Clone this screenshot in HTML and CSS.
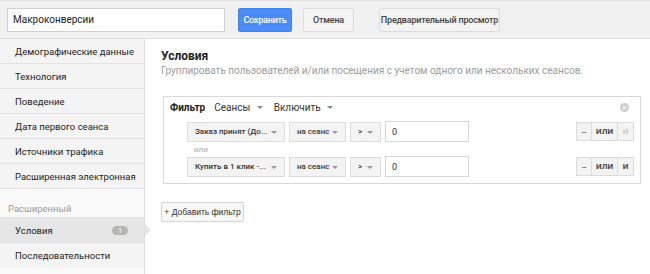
FILE: index.html
```html
<!DOCTYPE html>
<html lang="ru">
<head>
    <meta charset="UTF-8">
    <meta name="viewport" content="width=device-width, initial-scale=1.0">
    <title>Сегмент</title>
    <link rel="stylesheet" href="styles.css">
</head>
<body>
    <div class="topbar">
        <input class="name" type="text" value="Макроконверсии">
        <button class="btn primary">Сохранить</button>
        <button class="btn cancel">Отмена</button>
        <button class="btn preview">Предварительный просмотр</button>
    </div>
    <div class="content">
        <div class="sidebar">
            <div class="item">Демографические данные</div>
            <div class="item">Технология</div>
            <div class="item">Поведение</div>
            <div class="item">Дата первого сеанса</div>
            <div class="item">Источники трафика</div>
            <div class="item">Расширенная электронная</div>
            <div class="section">Расширенный</div>
            <div class="item selected">Условия <span class="badge">1</span></div>
            <div class="item last">Последовательности</div>
        </div>
        <div class="main">
            <div class="title">Условия</div>
            <div class="subtitle">Группировать пользователей и/или посещения с учетом одного или нескольких сеансов.</div>
            <div class="filter">
                <div class="filter-head">
                    <b>Фильтр</b>
                    <span class="menu">Сеансы <i class="caret"></i></span>
                    <span class="menu">Включить <i class="caret"></i></span>
                    <span class="close">×</span>
                </div>
                <div class="row">
                    <div class="select s1">Заказ принят (До... <i class="caret"></i></div>
                    <div class="select s2">на сеанс <i class="caret"></i></div>
                    <div class="select s3">&gt; <i class="caret"></i></div>
                    <input class="value" type="text" value="0">
                    <div class="ops">
                        <span>—</span><span>ИЛИ</span><span class="off">И</span>
                    </div>
                </div>
                <div class="or">или</div>
                <div class="row">
                    <div class="select s1">Купить в 1 клик -... <i class="caret"></i></div>
                    <div class="select s2">на сеанс <i class="caret"></i></div>
                    <div class="select s3">&gt; <i class="caret"></i></div>
                    <input class="value" type="text" value="0">
                    <div class="ops">
                        <span>—</span><span>ИЛИ</span><span>И</span>
                    </div>
                </div>
            </div>
            <button class="add">+ Добавить фильтр</button>
        </div>
    </div>
</body>
</html>
```
FILE: styles.css
```css
* {
    box-sizing: border-box;
}
body {
    margin: 0;
    font-family: Roboto, "Liberation Sans", Arial, sans-serif;
    color: #222;
    background: #fff;
}
.topbar {
    display: flex;
    align-items: center;
    height: 39px;
    padding-left: 7px;
    background: #f1f1f1;
    border-top: 1px solid #e4e4e4;
    border-bottom: 1px solid #dcdcdc;
}
.name {
    width: 218px;
    height: 24px;
    border: 1px solid #d0d0d0;
    padding: 0 5px;
    font-family: Roboto, sans-serif;
    font-size: 10px;
    color: #222;
    background: #fff;
}
.btn {
    height: 24px;
    border: 1px solid #dcdcdc;
    border-radius: 2px;
    background: #f3f3f3;
    font-family: Roboto, sans-serif;
    font-weight: 500;
    font-size: 9px;
    letter-spacing: -0.2px;
    color: #444;
    padding: 0;
}
.primary {
    margin-left: 13px;
    width: 54px;
    background: #4a8df8;
    border-color: #3f83ef;
    color: #fff;
}
.cancel {
    margin-left: 11px;
    width: 51px;
}
.preview {
    margin-left: 25px;
    width: 121px;
}
.content {
    display: flex;
    height: 235px;
}
.sidebar {
    width: 145px;
    background: #f9f9f9;
    border-right: 1px solid #dedede;
}
.item {
    position: relative;
    display: flex;
    align-items: center;
    height: 25px;
    padding-left: 15px;
    font-size: 9.5px;
    color: #222;
    background: #f4f4f4;
    border-bottom: 1px solid #e2e2e2;
}
.item.last {
    border-bottom: none;
}
.section {
    height: 29px;
    padding: 14px 0 0 8px;
    font-size: 9.5px;
    color: #9a9a9a;
    background: #f9f9f9;
    border-bottom: 1px solid #e2e2e2;
}
.item.selected {
    background: #e6e6e6;
}
.item.selected::after {
    content: "";
    position: absolute;
    right: -7px;
    top: 6px;
    width: 0;
    height: 0;
    border-top: 6px solid transparent;
    border-bottom: 6px solid transparent;
    border-left: 6px solid #e6e6e6;
}
.badge {
    position: absolute;
    left: 112px;
    top: 8px;
    width: 16px;
    height: 9px;
    border-radius: 5px;
    background: #b5b5b5;
    color: #fff;
    font-size: 8px;
    line-height: 9px;
    text-align: center;
}
.main {
    flex: 1;
    padding: 9px 0 0 16px;
}
.title {
    font-size: 12px;
    font-weight: bold;
    line-height: 16px;
    color: #222;
}
.subtitle {
    font-size: 10px;
    line-height: 14px;
    color: #9c9c9c;
}
.filter {
    width: 478px;
    margin: 18px 0 0 2px;
    border: 1px solid #d8d8d8;
    padding: 0 6px 6px 6px;
}
.filter-head {
    display: flex;
    align-items: center;
    height: 20px;
    font-size: 10px;
    margin-bottom: 4px;
}
.filter-head b {
    margin-right: 9px;
}
.menu {
    margin-right: 11px;
    color: #333;
}
.caret {
    display: inline-block;
    width: 0;
    height: 0;
    margin-left: 4px;
    vertical-align: middle;
    border-left: 3px solid transparent;
    border-right: 3px solid transparent;
    border-top: 3px solid #888;
}
.close {
    margin-left: auto;
    margin-right: 5px;
    width: 9px;
    height: 9px;
    border-radius: 50%;
    background: #cfcfcf;
    color: #fff;
    font-size: 8px;
    line-height: 9px;
    text-align: center;
}
.row {
    display: flex;
    align-items: center;
    padding-left: 17px;
    height: 21px;
}
.select {
    position: relative;
    height: 20px;
    margin-right: 4px;
    padding-left: 7px;
    display: flex;
    align-items: center;
    font-size: 8px;
    font-weight: 500;
    color: #333;
    background: #f3f3f3;
    border: 1px solid #dcdcdc;
}
.select .caret {
    position: absolute;
    right: 7px;
    top: 8px;
    border-top-color: #999;
}
.s1 {
    width: 98px;
}
.s2 {
    width: 57px;
}
.s3 {
    width: 31px;
}
.value {
    width: 84px;
    height: 21px;
    border: 1px solid #d6d6d6;
    padding: 0 6px;
    font-family: Roboto, sans-serif;
    font-size: 9px;
    color: #333;
}
.ops {
    display: flex;
    margin-left: auto;
    height: 19px;
}
.ops span {
    display: flex;
    align-items: center;
    justify-content: center;
    min-width: 16px;
    padding: 0 4px;
    font-size: 8px;
    font-weight: bold;
    color: #444;
    background: #f3f3f3;
    border: 1px solid #dcdcdc;
    border-left: none;
}
.ops span:first-child {
    border-left: 1px solid #dcdcdc;
    font-size: 6px;
}
.ops span.off {
    color: #ccc;
}
.or {
    padding: 3px 0 0 24px;
    height: 14px;
    font-size: 8px;
    color: #aaa;
}
.add {
    margin: 18px 0 0 0;
    width: 83px;
    height: 20px;
    padding: 0;
    border: 1px solid #d4d4d4;
    border-radius: 2px;
    background: #f7f7f7;
    font-family: "Liberation Sans", Arial, sans-serif;
    font-size: 8.5px;
    color: #333;
}
```
